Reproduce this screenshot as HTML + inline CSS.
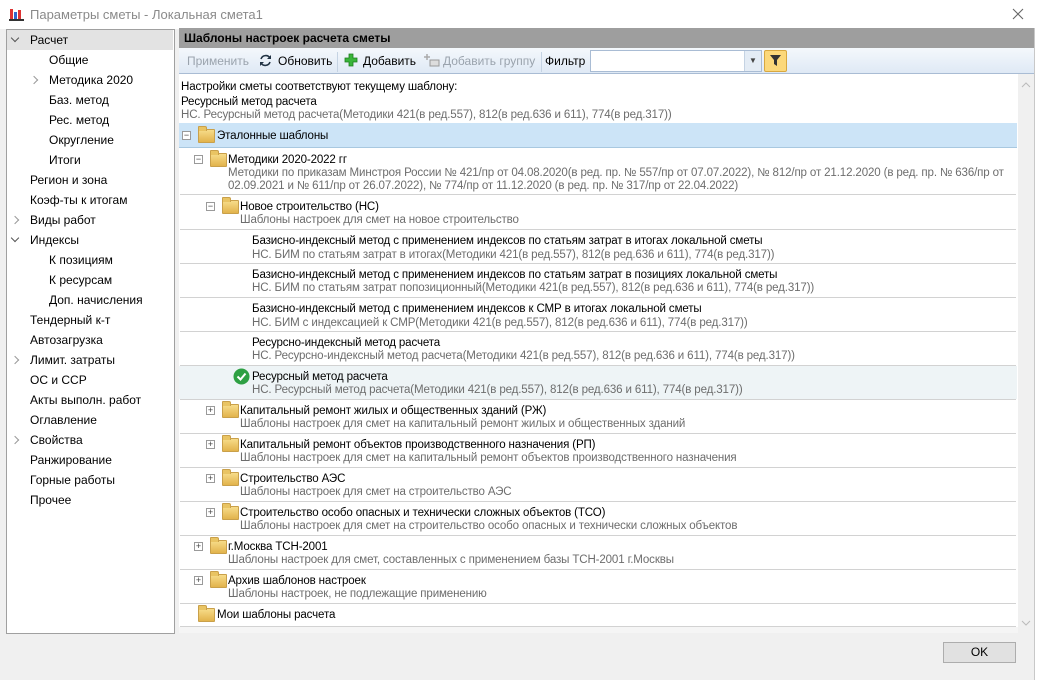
<!DOCTYPE html>
<html><head><meta charset="utf-8">
<style>
*{margin:0;padding:0;box-sizing:border-box}
body{width:1040px;height:680px;background:#f0f0f0;font-family:"Liberation Sans","DejaVu Sans",sans-serif;font-size:12px;color:#000;position:relative;overflow:hidden}
.a{position:absolute;white-space:nowrap}
.t{font-size:11.55px;line-height:13px;letter-spacing:-0.14px;margin-top:1px}
.g{color:#6d6d6d}
.sep{position:absolute;left:180px;width:836px;height:1px;background:#d2d2d2}
.fold{position:absolute;width:17px;height:14px;border-radius:1px;background:linear-gradient(#f7dc8a,#e2b34c);border:1px solid #c9a04a}
.fold:before{content:"";position:absolute;left:-1px;top:-4px;width:7px;height:4px;background:#e9c463;border:1px solid #c9a04a;border-bottom:none;border-radius:1px 2px 0 0}
.box{position:absolute;width:9px;height:9px;border:1px solid #9a9a9a;background:#fff;font-size:9px;line-height:7px;text-align:center;color:#444}
.nav{position:absolute;left:30px;font-size:12px}
.sub{left:49px}
.chev{position:absolute;left:12px;width:6px;height:6px;border-right:1.3px solid #999;border-bottom:1.3px solid #999}
.r{transform:rotate(-45deg)}
.d{transform:rotate(45deg);border-color:#555}
</style></head><body>
<div class="a" style="left:0;top:0;width:1040px;height:29px;background:#fff"></div>
<svg class="a" style="left:9px;top:7px" width="16" height="15"><rect x="1" y="2" width="3" height="11" fill="#d33"/><rect x="5" y="5" width="3" height="8" fill="#36c"/><rect x="9" y="3" width="3" height="10" fill="#d33"/><rect x="0" y="12" width="15" height="2" fill="#333"/></svg>
<div class="a" style="left:30px;top:7px;font-size:13px;color:#8a8a8a">Параметры сметы - Локальная смета1</div>
<svg class="a" style="left:1012px;top:8px" width="12" height="12"><path d="M1 1l10 10M11 1L1 11" stroke="#666" stroke-width="1.1"/></svg>
<div class="a" style="left:6px;top:29px;width:169px;height:605px;background:#fff;border:1px solid #a0a0a0"></div>
<div class="a" style="left:7px;top:30px;width:166px;height:20px;background:#e3e3e3"></div>
<div class="chev d" style="top:35px"></div>
<div class="nav" style="top:33px">Расчет</div>
<div class="nav sub" style="top:53px">Общие</div>
<div class="chev r" style="left:31px;top:77px"></div>
<div class="nav sub" style="top:73px">Методика 2020</div>
<div class="nav sub" style="top:93px">Баз. метод</div>
<div class="nav sub" style="top:113px">Рес. метод</div>
<div class="nav sub" style="top:133px">Округление</div>
<div class="nav sub" style="top:153px">Итоги</div>
<div class="nav" style="top:173px">Регион и зона</div>
<div class="nav" style="top:193px">Коэф-ты к итогам</div>
<div class="chev r" style="top:217px"></div>
<div class="nav" style="top:213px">Виды работ</div>
<div class="chev d" style="top:235px"></div>
<div class="nav" style="top:233px">Индексы</div>
<div class="nav sub" style="top:253px">К позициям</div>
<div class="nav sub" style="top:273px">К ресурсам</div>
<div class="nav sub" style="top:293px">Доп. начисления</div>
<div class="nav" style="top:313px">Тендерный к-т</div>
<div class="nav" style="top:333px">Автозагрузка</div>
<div class="chev r" style="top:357px"></div>
<div class="nav" style="top:353px">Лимит. затраты</div>
<div class="nav" style="top:373px">ОС и ССР</div>
<div class="nav" style="top:393px">Акты выполн. работ</div>
<div class="nav" style="top:413px">Оглавление</div>
<div class="chev r" style="top:437px"></div>
<div class="nav" style="top:433px">Свойства</div>
<div class="nav" style="top:453px">Ранжирование</div>
<div class="nav" style="top:473px">Горные работы</div>
<div class="nav" style="top:493px">Прочее</div>
<div class="a" style="left:179px;top:28px;width:855px;height:20px;background:#9e9e9e"></div>
<div class="a" style="left:184px;top:31px;font-weight:bold;font-size:12px">Шаблоны настроек расчета сметы</div>
<div class="a" style="left:179px;top:48px;width:855px;height:26px;background:linear-gradient(#f4f8fc,#dfe9f5);border-bottom:1px solid #a9bcd4"></div>
<div class="a" style="left:187px;top:54px;color:#9aa3ad">Применить</div>
<svg class="a" style="left:258px;top:53px" width="15" height="15"><path d="M3 6a5 5 0 0 1 9-1M12 9a5 5 0 0 1-9 1" fill="none" stroke="#234" stroke-width="1.6"/><path d="M13 2v4h-4z M2 13v-4h4z" fill="#234"/></svg>
<div class="a" style="left:278px;top:54px">Обновить</div>
<div class="a" style="left:337px;top:52px;width:1px;height:20px;background:#c5d3e3"></div>
<svg class="a" style="left:344px;top:53px" width="14" height="14"><path d="M5 1h4v4h4v4h-4v4h-4v-4h-4v-4h4z" fill="#3ab53a" stroke="#1e7e1e" stroke-width="0.8"/></svg>
<div class="a" style="left:363px;top:54px">Добавить</div>
<svg class="a" style="left:424px;top:53px" width="16" height="15"><path d="M3 1v6M0 4h6" stroke="#aaa" stroke-width="1.5"/><rect x="6" y="7" width="9" height="6" fill="#ddd" stroke="#999"/></svg>
<div class="a" style="left:443px;top:54px;color:#9aa3ad">Добавить группу</div>
<div class="a" style="left:541px;top:52px;width:1px;height:20px;background:#c5d3e3"></div>
<div class="a" style="left:545px;top:54px">Фильтр</div>
<div class="a" style="left:590px;top:50px;width:172px;height:22px;background:#fff;border:1px solid #a9bcd4"></div>
<div class="a" style="left:744px;top:51px;width:17px;height:20px;background:#e4ecf5;border-left:1px solid #c5d3e3;font-size:8px;text-align:center;line-height:20px;color:#444">▼</div>
<div class="a" style="left:764px;top:50px;width:23px;height:22px;background:#fcd87a;border:1px solid #d8a840;border-radius:2px"></div>
<svg class="a" style="left:769px;top:54px" width="13" height="13"><path d="M1 1h11l-4 5v6l-3-2v-4z" fill="#333"/></svg>
<div class="a" style="left:179px;top:74px;width:855px;height:559px;background:#fff"></div>
<div class="a" style="left:1018px;top:74px;width:16px;height:559px;background:#f0f0f0"></div>
<svg class="a" style="left:1021px;top:82px" width="10" height="6"><path d="M1 5l4-4 4 4" fill="none" stroke="#bbb"/></svg>
<svg class="a" style="left:1021px;top:620px" width="10" height="6"><path d="M1 1l4 4 4-4" fill="none" stroke="#bbb"/></svg>
<div class="a t" style="left:181px;top:80px">Настройки сметы соответствуют текущему шаблону:</div>
<div class="a t" style="left:181px;top:95px">Ресурсный метод расчета</div>
<div class="a t g" style="left:181px;top:108px">НС. Ресурсный метод расчета(Методики 421(в ред.557), 812(в ред.636 и 611), 774(в ред.317))</div>
<div class="a" style="left:179px;top:123px;width:838px;height:25px;background:#cce4f7;border-bottom:1px solid #a8c8e0"></div>
<div class="box" style="left:182px;top:131px">−</div>
<div class="fold" style="left:198px;top:129px"></div>
<div class="a t" style="left:217px;top:129px">Эталонные шаблоны</div>

<div class="box" style="left:194px;top:155px">−</div>
<div class="fold" style="left:210px;top:153px"></div>
<div class="a t" style="left:228px;top:153px">Методики 2020-2022 гг</div>
<div class="a t g" style="left:228px;top:166px">Методики по приказам Минстроя России № 421/пр от 04.08.2020(в ред. пр. № 557/пр от 07.07.2022), № 812/пр от 21.12.2020 (в ред. пр. № 636/пр от</div>
<div class="a t g" style="left:228px;top:179px">02.09.2021 и № 611/пр от 26.07.2022), № 774/пр от 11.12.2020 (в ред. пр. № 317/пр от 22.04.2022)</div>
<div class="sep" style="top:194px"></div>

<div class="box" style="left:206px;top:202px">−</div>
<div class="fold" style="left:222px;top:200px"></div>
<div class="a t" style="left:240px;top:200px">Новое строительство (НС)</div>
<div class="a t g" style="left:240px;top:213px">Шаблоны настроек для смет на новое строительство</div>
<div class="sep" style="top:229px"></div>

<div class="a t" style="left:252px;top:234px">Базисно-индексный метод с применением индексов по статьям затрат в итогах локальной сметы</div>
<div class="a t g" style="left:252px;top:248px">НС. БИМ по статьям затрат в итогах(Методики 421(в ред.557), 812(в ред.636 и 611), 774(в ред.317))</div>
<div class="sep" style="top:263px"></div>
<div class="a t" style="left:252px;top:268px">Базисно-индексный метод с применением индексов по статьям затрат в позициях локальной сметы</div>
<div class="a t g" style="left:252px;top:281px">НС. БИМ по статьям затрат попозиционный(Методики 421(в ред.557), 812(в ред.636 и 611), 774(в ред.317))</div>
<div class="sep" style="top:297px"></div>
<div class="a t" style="left:252px;top:302px">Базисно-индексный метод с применением индексов к СМР в итогах локальной сметы</div>
<div class="a t g" style="left:252px;top:316px">НС. БИМ с индексацией к СМР(Методики 421(в ред.557), 812(в ред.636 и 611), 774(в ред.317))</div>
<div class="sep" style="top:331px"></div>
<div class="a t" style="left:252px;top:336px">Ресурсно-индексный метод расчета</div>
<div class="a t g" style="left:252px;top:349px">НС. Ресурсно-индексный метод расчета(Методики 421(в ред.557), 812(в ред.636 и 611), 774(в ред.317))</div>
<div class="sep" style="top:365px"></div>
<div class="a" style="left:179px;top:366px;width:838px;height:33px;background:#eef4f6"></div>
<svg class="a" style="left:233px;top:368px" width="17" height="17"><circle cx="8.5" cy="8.5" r="8" fill="#2ea043"/><path d="M4.5 8.5l3 3 5-6" fill="none" stroke="#fff" stroke-width="2"/></svg>
<div class="a t" style="left:252px;top:370px">Ресурсный метод расчета</div>
<div class="a t g" style="left:252px;top:383px">НС. Ресурсный метод расчета(Методики 421(в ред.557), 812(в ред.636 и 611), 774(в ред.317))</div>
<div class="sep" style="top:399px"></div>

<div class="box" style="left:206px;top:406px">+</div>
<div class="fold" style="left:222px;top:404px"></div>
<div class="a t" style="left:240px;top:404px">Капитальный ремонт жилых и общественных зданий (РЖ)</div>
<div class="a t g" style="left:240px;top:417px">Шаблоны настроек для смет на капитальный ремонт жилых и общественных зданий</div>
<div class="sep" style="top:433px"></div>
<div class="box" style="left:206px;top:440px">+</div>
<div class="fold" style="left:222px;top:438px"></div>
<div class="a t" style="left:240px;top:438px">Капитальный ремонт объектов производственного назначения (РП)</div>
<div class="a t g" style="left:240px;top:451px">Шаблоны настроек для смет на капитальный ремонт объектов производственного назначения</div>
<div class="sep" style="top:467px"></div>
<div class="box" style="left:206px;top:474px">+</div>
<div class="fold" style="left:222px;top:472px"></div>
<div class="a t" style="left:240px;top:472px">Строительство АЭС</div>
<div class="a t g" style="left:240px;top:485px">Шаблоны настроек для смет на строительство АЭС</div>
<div class="sep" style="top:501px"></div>
<div class="box" style="left:206px;top:508px">+</div>
<div class="fold" style="left:222px;top:506px"></div>
<div class="a t" style="left:240px;top:506px">Строительство особо опасных и технически сложных объектов (ТСО)</div>
<div class="a t g" style="left:240px;top:519px">Шаблоны настроек для смет на строительство особо опасных и технически сложных объектов</div>
<div class="sep" style="top:535px"></div>

<div class="box" style="left:194px;top:542px">+</div>
<div class="fold" style="left:210px;top:540px"></div>
<div class="a t" style="left:228px;top:540px">г.Москва ТСН-2001</div>
<div class="a t g" style="left:228px;top:553px">Шаблоны настроек для смет, составленных с применением базы ТСН-2001 г.Москвы</div>
<div class="sep" style="top:569px"></div>
<div class="box" style="left:194px;top:576px">+</div>
<div class="fold" style="left:210px;top:574px"></div>
<div class="a t" style="left:228px;top:574px">Архив шаблонов настроек</div>
<div class="a t g" style="left:228px;top:587px">Шаблоны настроек, не подлежащие применению</div>
<div class="sep" style="top:603px"></div>
<div class="fold" style="left:198px;top:608px"></div>
<div class="a t" style="left:217px;top:608px">Мои шаблоны расчета</div>
<div class="sep" style="top:626px"></div>
<div class="a" style="left:179px;top:627px;width:839px;height:6px;background:#f5f5f5"></div>
<div class="a" style="left:943px;top:642px;width:73px;height:21px;background:#e1e1e1;border:1px solid #adadad;text-align:center;line-height:19px">OK</div>
<div class="a" style="left:1035px;top:0;width:5px;height:680px;background:#fff"></div>
<div class="a" style="left:1034px;top:28px;width:1px;height:652px;background:#c8c8c8"></div>
</body></html>
